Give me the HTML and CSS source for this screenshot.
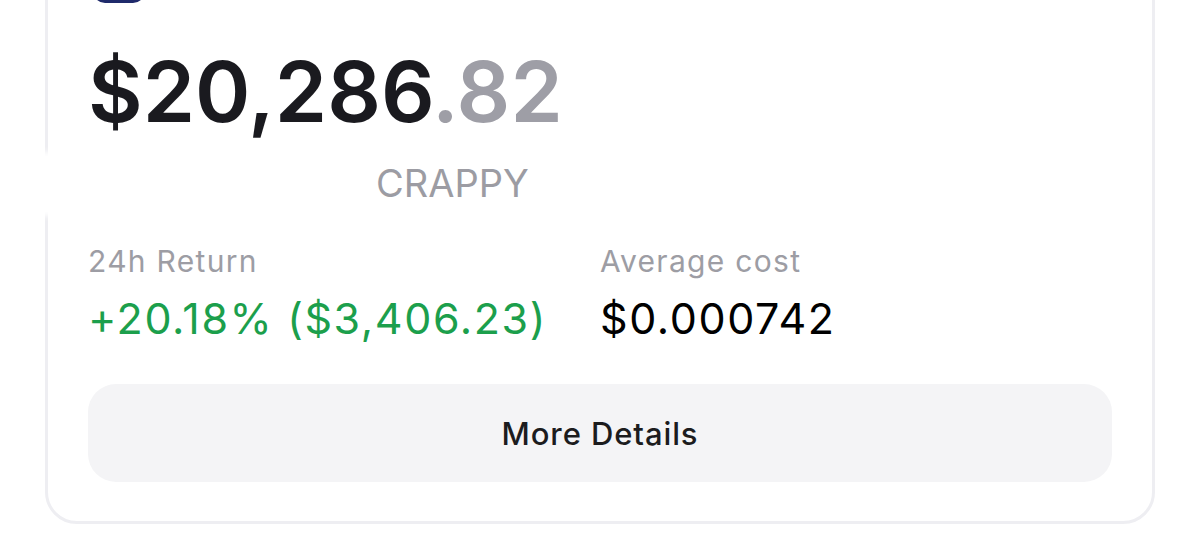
FILE: index.html
```html
<!DOCTYPE html>
<html>
<head>
<meta charset="utf-8">
<link rel="stylesheet" href="styles.css">
</head>
<body>
<div class="card">
  <div class="token-icon"></div>
  <div class="balance"><span class="whole">$20,286</span><span class="cents">.82</span></div>
  <div class="token-name">CRAPPY</div>
  <div class="stats">
    <div class="stat">
      <div class="stat-label">24h Return</div>
      <div class="stat-value up">+20.18% ($3,406.23)</div>
    </div>
    <div class="stat">
      <div class="stat-label">Average cost</div>
      <div class="stat-value">$0.000742</div>
    </div>
  </div>
  <button class="details-btn">More Details</button>
  <div class="smudge"></div>
</div>
</body>
</html>
```
FILE: styles.css
```css
html, body {
  margin: 0;
  padding: 0;
  background: #ffffff;
}
body {
  font-family: Inter, "Noto Sans", "Liberation Sans", sans-serif;
  overflow: hidden;
  height: 544px;
}
.card {
  position: relative;
  margin: -60px 45px 0 45px;
  border: 3px solid #eeeef2;
  border-radius: 32px;
  padding: 0 40px 39px 40px;
  background: #ffffff;
}
.token-icon {
  width: 52px;
  height: 50px;
  margin-left: 5px;
  background: #1f2a6b;
  border-radius: 12px;
  margin-top: 10px;
}
.balance {
  margin-top: 47px;
  font-size: 84px;
  line-height: 84px;
  font-weight: 600;
  letter-spacing: 0;
  color: #1a1a1f;
}
.cents {
  color: #9e9ea6;
}
.token-name {
  margin-top: 29px;
  margin-left: 288px;
  font-size: 38px;
  line-height: 40px;
  color: #9c9ca3;
  font-weight: 400;
}
.stats {
  margin-top: 40px;
  display: grid;
  grid-template-columns: 1fr 1fr;
}
.stat-label {
  font-size: 30px;
  line-height: 36px;
  letter-spacing: 1.3px;
  color: #9d9da4;
}
.stat-value {
  margin-top: 15px;
  font-size: 43px;
  line-height: 48px;
  letter-spacing: 1.6px;
  color: #000000;
}
.stat-value.up {
  color: #1c9f4c;
}
.details-btn {
  display: block;
  width: 100%;
  margin-top: 42px;
  height: 98px;
  border: none;
  border-radius: 28px;
  background: #f4f4f6;
  font-family: Inter, "Noto Sans", "Liberation Sans", sans-serif;
  font-size: 31px;
  font-weight: 500;
  letter-spacing: 0.9px;
  color: #1c1c1e;
}
.smudge {
  position: absolute;
  left: -60px;
  top: 213px;
  width: 380px;
  height: 56px;
  background: #ffffff;
  box-shadow: 0 0 6px 4px #ffffff;
}
```
